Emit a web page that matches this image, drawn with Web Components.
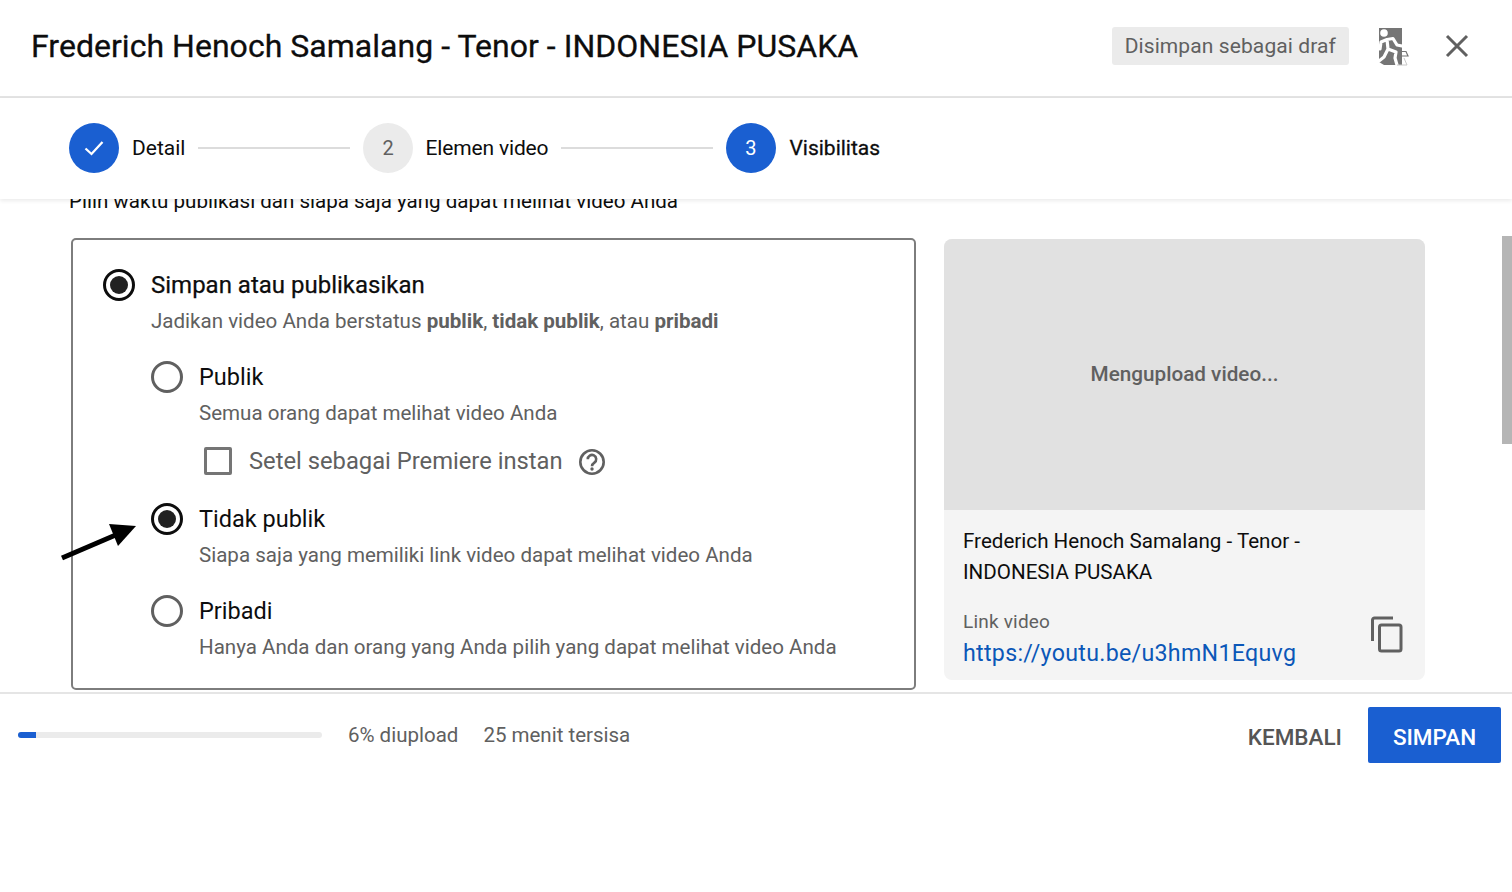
<!DOCTYPE html>
<html lang="id">
<head>
<meta charset="utf-8">
<title>Visibilitas</title>
<style>
html, body { margin: 0; height: 100%; background: #fff; font-family: Roboto, "Liberation Sans", sans-serif; color: #0d0d0d; }
</style>
</head>
<body>
<upload-dialog></upload-dialog>
<script>
function define(name, html) {
  const template = document.createElement("template");
  template.innerHTML = html;
  customElements.define(name, class extends HTMLElement {
    constructor() {
      super();
      this.attachShadow({ mode: "open" }).appendChild(template.content.cloneNode(true));
    }
  });
}

define("dialog-header", `
<style>
:host { display: flex; align-items: center; height: 92px; padding: 0 43px 4px 31px; border-bottom: 2px solid #e3e3e3; box-sizing: content-box; }
h1 { flex: 1; margin: 0; font-size: 32px; font-weight: 400; letter-spacing: .03px; -webkit-text-stroke: .3px #0d0d0d; white-space: nowrap; }
.badge { background: #ebebeb; color: #606060; font-size: 21px; letter-spacing: .1px; line-height: 38px; padding: 0 13px; border-radius: 3px; margin-right: 29px; }
.exit { width: 32px; height: 42px; margin-right: 35px; display: block; }
.close { width: 24px; height: 24px; display: block; }
</style>
<h1>Frederich Henoch Samalang - Tenor - INDONESIA PUSAKA</h1>
<span class="badge">Disimpan sebagai draf</span>
<svg class="exit" viewBox="0 0 32 42">
  <path d="M1 3H24V40H6L1 37Z" fill="#757575"/>
  <circle cx="6" cy="8" r="3.800" fill="#fff"/>
  <path d="M2 24L3 17L9 14.500L15 13.500L19 20L24 21M9 14.500L10 24L6 32L1 36M10 24L18 27L17 33L19 40" fill="none" stroke="#fff" stroke-width="3.200" stroke-linecap="round" stroke-linejoin="round"/>
  <path d="M24 26.500H28L30 31H24" fill="#fff" stroke="#757575" stroke-width="1.200"/>
  <path d="M19 40H29L26 33" fill="none" stroke="#c8c8c8" stroke-width="1"/>
</svg>
<svg class="close" viewBox="0 0 24 24"><path d="M2 2L22 22M22 2L2 22" stroke="#606060" stroke-width="3" fill="none"/></svg>
`);

define("step-item", `
<style>
:host { display: flex; align-items: center; gap: 13px; font-size: 21px; white-space: nowrap; }
:host([tight]) { gap: 12px; letter-spacing: -.15px; }
.dot { width: 50px; height: 50px; border-radius: 50%; display: flex; align-items: center; justify-content: center; background: #ebebeb; color: #606060; font-size: 20px; padding-right: 1px; box-sizing: border-box; }
:host([active]) .dot { background: #1a5fd1; color: #fff; }
:host([strong]) .label { -webkit-text-stroke: .3px #0d0d0d; }
</style>
<span class="dot"><slot name="mark"></slot></span>
<span class="label"><slot></slot></span>
`);

define("step-line", `
<style>
:host { display: block; width: 152px; height: 2px; background: #dcdcdc; margin: 0 13px; }
</style>
`);

define("step-bar", `
<style>
:host { display: flex; align-items: center; height: 99px; padding: 0 0 2px 69px; background: #fff; box-shadow: 0 2px 4px rgba(0,0,0,.08); position: relative; z-index: 1; }
</style>
<slot></slot>
`);

define("radio-option", `
<style>
:host { display: grid; grid-template-columns: 32px 1fr; column-gap: 16px; --ring: #606060; }
:host([checked]) { --ring: #0d0d0d; }
.ring { width: 32px; height: 32px; box-sizing: border-box; border: 3px solid var(--ring); border-radius: 50%; display: flex; align-items: center; justify-content: center; align-self: center; }
:host([checked]) .ring::after { content: ""; width: 18px; height: 18px; border-radius: 50%; background: #212121; }
.label { font-size: 23.5px; line-height: 36px; }
:host([main]) .label { font-size: 24px; -webkit-text-stroke: .25px #0d0d0d; }
.desc { grid-column: 2; color: #606060; font-size: 20.56px; line-height: 36px; white-space: nowrap; }
::slotted(b) { font-weight: 700; }
</style>
<span class="ring"></span>
<span class="label"><slot name="label"></slot></span>
<span class="desc"><slot></slot></span>
`);

define("premiere-check", `
<style>
:host { display: flex; align-items: center; height: 36px; margin: -8px 0 2px 53px; color: #606060; font-size: 23.75px; white-space: nowrap; }
.box { width: 28px; height: 28px; box-sizing: border-box; border: 3px solid #757575; border-radius: 2px; margin-right: 17px; }
svg { width: 28px; height: 28px; margin-left: 15px; margin-top: 2px; }
</style>
<span class="box"></span>
<slot></slot>
<svg viewBox="0 0 28 28">
  <circle cx="14" cy="14" r="11.7" fill="none" stroke="#606060" stroke-width="2.6"/>
  <path d="M9.8 11.2a4.2 4.2 0 1 1 6.6 3.4c-1.5 1-2.400 1.700-2.400 3.600" fill="none" stroke="#606060" stroke-width="2.6"/>
  <circle cx="14" cy="21" r="1.7" fill="#606060"/>
</svg>
`);

define("visibility-card", `
<style>
:host { display: flex; flex-direction: column; gap: 20px; box-sizing: border-box; width: 845px; height: 452px; padding: 27px 30px 0; border: 2px solid #7d7d7d; border-radius: 5px; position: relative; flex: none; }
.sub { display: flex; flex-direction: column; gap: 20px; margin-left: 48px; }
</style>
<slot name="head"></slot>
<div class="sub"><slot></slot></div>
`);

define("preview-card", `
<style>
:host { display: block; width: 481px; height: 441px; border-radius: 8px; overflow: hidden; background: #f4f4f4; flex: none; margin-top: 1px; }
.thumb { height: 271px; background: #e1e1e1; color: #606060; font-size: 20.7px; font-weight: 500; display: flex; align-items: center; justify-content: center; padding-bottom: 2px; box-sizing: border-box; }
.info { padding: 16px 19px 0; position: relative; }
.title { font-size: 20.6px; line-height: 31px; width: 400px; }
.cap { color: #606060; font-size: 19px; margin-top: 20px; line-height: 27px; letter-spacing: .2px; }
.url { color: #0b57b8; font-size: 23.2px; line-height: 36px; letter-spacing: .3px; display: block; text-decoration: none; }
svg { position: absolute; right: 21px; top: 106px; width: 34px; height: 38px; }
</style>
<div class="thumb">Mengupload video...</div>
<div class="info">
  <div class="title">Frederich Henoch Samalang - Tenor - INDONESIA PUSAKA</div>
  <div class="cap">Link video</div>
  <a class="url" href="#">https://youtu.be/u3hmN1Equvg</a>
  <svg viewBox="0 0 34 38" fill="none" stroke="#606060" stroke-width="3"><path d="M2.500 25V4a2 2 0 0 1 2-2H23"/><rect x="9.500" y="9" width="21.500" height="26" rx="2"/></svg>
</div>
`);

define("upload-footer", `
<style>
:host { display: flex; align-items: center; height: 73px; padding: 4px 11px 0 18px; border-top: 2px solid #e5e5e5; color: #606060; font-size: 20.5px; }
.track { width: 304px; height: 6px; background: #ebebeb; border-radius: 3px; margin-right: 26px; overflow: hidden; }
.fill { width: 18px; height: 100%; background: #1a5fd1; }
.left { margin-right: 25px; white-space: nowrap; }
.back { margin-left: auto; font-size: 22.500px; font-weight: 500; color: #555; margin-right: 26px; padding-top: 4px; }
.save { width: 133px; height: 56px; padding-top: 4px; box-sizing: border-box; background: #1a5fd1; color: #fff; font-size: 22.500px; font-weight: 500; border-radius: 2px; display: flex; align-items: center; justify-content: center; }
</style>
<div class="track"><div class="fill"></div></div>
<span class="left">6% diupload</span>
<span class="left">25 menit tersisa</span>
<span class="back">KEMBALI</span>
<span class="save">SIMPAN</span>
`);

define("upload-dialog", `
<style>
:host { display: block; height: 892px; overflow: hidden; position: relative; }
.scroll { height: 493px; overflow: hidden; position: relative; }
.intro { margin: -12px 0 0 69px; font-size: 20.56px; line-height: 28px; white-space: nowrap; }
.cols { display: flex; gap: 28px; margin: 23px 0 0 71px; }
.thumbbar { position: absolute; right: 0; top: 37px; width: 10px; height: 208px; background: #b5b5b5; }
.arrow { position: absolute; left: 58px; top: 520px; width: 82px; height: 44px; z-index: 2; }
svg.check { width: 22px; height: 18px; display: block; }
</style>
<dialog-header></dialog-header>
<step-bar>
  <step-item active>
    <svg slot="mark" class="check" viewBox="0 0 22 18"><path d="M2.500 9.500L8.500 15L19.500 3" fill="none" stroke="#fff" stroke-width="2.300"/></svg>
    Detail
  </step-item>
  <step-line></step-line>
  <step-item tight><span slot="mark">2</span>Elemen video</step-item>
  <step-line></step-line>
  <step-item active strong><span slot="mark">3</span>Visibilitas</step-item>
</step-bar>
<div class="scroll">
  <div class="intro">Pilih waktu publikasi dan siapa saja yang dapat melihat video Anda</div>
  <div class="cols">
    <visibility-card>
      <radio-option slot="head" main checked>
        <span slot="label">Simpan atau publikasikan</span>
        Jadikan video Anda berstatus <b>publik</b>, <b>tidak publik</b>, atau <b>pribadi</b>
      </radio-option>
      <radio-option>
        <span slot="label">Publik</span>
        Semua orang dapat melihat video Anda
      </radio-option>
      <premiere-check>Setel sebagai Premiere instan</premiere-check>
      <radio-option checked>
        <span slot="label">Tidak publik</span>
        Siapa saja yang memiliki link video dapat melihat video Anda
      </radio-option>
      <radio-option>
        <span slot="label">Pribadi</span>
        Hanya Anda dan orang yang Anda pilih yang dapat melihat video Anda
      </radio-option>
    </visibility-card>
    <preview-card></preview-card>
  </div>
  <div class="thumbbar"></div>
</div>
<upload-footer></upload-footer>
<svg class="arrow" viewBox="0 0 82 44">
  <path d="M4 38L60 14" stroke="#000" stroke-width="5" fill="none"/>
  <path d="M78 6L51 4L60 26Z" fill="#000"/>
</svg>
`);
</script>
</body>
</html>
